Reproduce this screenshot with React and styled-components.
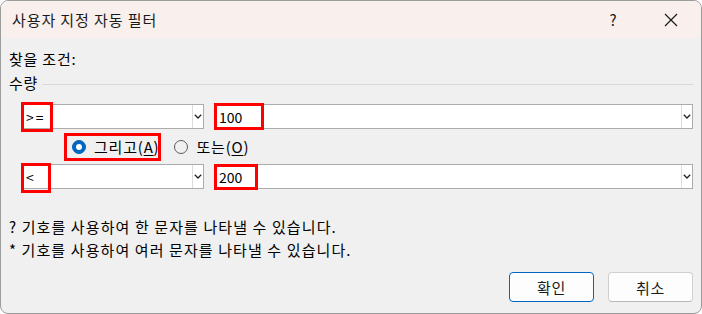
import React from 'react'
import styled, { createGlobalStyle } from 'styled-components'

const GlobalStyle = createGlobalStyle`
  html, body {
    margin: 0;
    padding: 0;
    background: #ffffff;
  }
  body {
    font-family: "Noto Sans CJK KR", "Noto Sans", sans-serif;
    color: #000;
    letter-spacing: 0.8px;
  }
  * { box-sizing: border-box; }
`

const Dialog = styled.div`
  width: 702px;
  height: 314px;
  border: 1px solid #9c9c9c;
  border-radius: 8px;
  overflow: hidden;
  background: #f0f0f0;
  display: flex;
  flex-direction: column;
`

const TitleBar = styled.div`
  height: 37px;
  flex: none;
  background: #f9f0ee;
  display: flex;
  align-items: center;
  padding-left: 11px;
`

const Title = styled.div`
  flex: 1;
  font-size: 15px;
  line-height: 20px;
  letter-spacing: 0.9px;
  color: #1a1a1a;
`

const TitleButton = styled.div`
  width: ${p => p.$w}px;
  height: 37px;
  display: flex;
  align-items: center;
  justify-content: center;
  font-size: 15px;
  letter-spacing: 0;
  color: #1a1a1a;
`

const Body = styled.div`
  flex: 1;
  display: flex;
  flex-direction: column;
  padding: 11px 8px 0 8px;
`

const Label = styled.div`
  font-size: 15px;
  line-height: 20px;
`

const GroupHeader = styled.div`
  display: flex;
  align-items: center;
  gap: 4px;
  margin-top: 4px;
  font-size: 15px;
  line-height: 20px;
  &::after {
    content: '';
    flex: 1;
    height: 1px;
    background: #d9d9d9;
    margin-top: 2px;
  }
`

const Conditions = styled.div`
  display: flex;
  flex-direction: column;
  padding-left: 12px;
  margin-top: 11px;
`

const Row = styled.div`
  display: grid;
  grid-template-columns: 183px 1fr;
  gap: 10px;
`

const Combo = styled.div`
  position: relative;
  height: 25px;
  background: #fff;
  border: 1px solid #acacac;
  display: flex;
  align-items: center;
`

const ComboText = styled.span`
  flex: 1;
  padding-left: 4px;
  font-size: 14px;
  line-height: 20px;
  letter-spacing: ${p => p.$spacing || 0}px;
`

const ComboButton = styled.div`
  width: 11px;
  align-self: stretch;
  border-left: 1px solid #dcdcdc;
  display: flex;
  align-items: center;
  justify-content: center;
`

const Highlight = styled.div`
  position: absolute;
  border: 3px solid #ff0000;
  pointer-events: none;
  left: ${p => p.$left}px;
  top: ${p => p.$top}px;
  width: ${p => p.$w}px;
  height: ${p => p.$h}px;
`

const RadioRow = styled.div`
  display: flex;
  align-items: center;
  height: 35px;
  padding-left: 47px;
  gap: 7px;
`

const RadioItem = styled.label`
  position: relative;
  display: flex;
  align-items: center;
  gap: 8px;
  font-size: 15px;
  line-height: 20px;
  padding: 0 4px 0 4px;
`

const RadioDot = styled.span`
  width: 14px;
  height: 14px;
  border-radius: 50%;
  flex: none;
  background: ${p => (p.$on ? '#0067c0' : 'transparent')};
  border: 1px solid ${p => (p.$on ? '#0067c0' : '#5c5c5c')};
  display: flex;
  align-items: center;
  justify-content: center;
  &::after {
    content: '';
    width: 6px;
    height: 6px;
    border-radius: 50%;
    background: #fff;
    display: ${p => (p.$on ? 'block' : 'none')};
  }
`

const Key = styled.span`
  text-decoration: underline;
  text-underline-offset: 2px;
`

const Help = styled.div`
  margin-top: 26px;
  font-size: 15px;
  line-height: 23px;
  letter-spacing: 1.1px;
`

const Buttons = styled.div`
  display: flex;
  justify-content: flex-end;
  gap: 14px;
  margin-top: 11px;
`

const Button = styled.div`
  width: 85px;
  height: 30px;
  border-radius: 4px;
  background: #fdfdfd;
  border: 1px solid ${p => (p.$primary ? '#0067c0' : '#d0d0d0')};
  border-bottom-color: ${p => (p.$primary ? '#0067c0' : '#b8b8b8')};
  display: flex;
  align-items: center;
  justify-content: center;
  font-size: 15px;
  color: #1a1a1a;
`

const Chevron = () => (
  <svg width="8" height="5" viewBox="0 0 8 5">
    <path d="M0.8 0.8 L4 4 L7.2 0.8" fill="none" stroke="#222" strokeWidth="1.3" />
  </svg>
)

const CloseIcon = () => (
  <svg width="14" height="14" viewBox="0 0 14 14">
    <path d="M1 1 L13 13 M13 1 L1 13" stroke="#1a1a1a" strokeWidth="1.2" />
  </svg>
)

function ComboBox({ value, spacing, mark }) {
  return (
    <Combo>
      <ComboText $spacing={spacing}>{value}</ComboText>
      <ComboButton><Chevron /></ComboButton>
      {mark && <Highlight {...mark} />}
    </Combo>
  )
}

export default function App() {
  return (
    <>
      <GlobalStyle />
      <Dialog>
        <TitleBar>
          <Title>사용자 지정 자동 필터</Title>
          <TitleButton $w={56}>?</TitleButton>
          <TitleButton $w={60}><CloseIcon /></TitleButton>
        </TitleBar>
        <Body>
          <Label>찾을 조건:</Label>
          <GroupHeader>수량</GroupHeader>
          <Conditions>
            <Row>
              <ComboBox value=">=" spacing={2} mark={{ $left: -1, $top: -3, $w: 32, $h: 30 }} />
              <ComboBox value="100" mark={{ $left: -1, $top: -2, $w: 50, $h: 27 }} />
            </Row>
            <RadioRow>
              <RadioItem>
                <RadioDot $on />
                <span>그리고(<Key>A</Key>)</span>
                <Highlight $left={-4} $top={-4} $w={97} $h={28} />
              </RadioItem>
              <RadioItem>
                <RadioDot />
                <span>또는(<Key>O</Key>)</span>
              </RadioItem>
            </RadioRow>
            <Row>
              <ComboBox value="<" mark={{ $left: -1, $top: -2, $w: 30, $h: 30 }} />
              <ComboBox value="200" mark={{ $left: -1, $top: -1, $w: 44, $h: 26 }} />
            </Row>
          </Conditions>
          <Help>
            <div>? 기호를 사용하여 한 문자를 나타낼 수 있습니다.</div>
            <div>* 기호를 사용하여 여러 문자를 나타낼 수 있습니다.</div>
          </Help>
          <Buttons>
            <Button $primary>확인</Button>
            <Button>취소</Button>
          </Buttons>
        </Body>
      </Dialog>
    </>
  )
}
